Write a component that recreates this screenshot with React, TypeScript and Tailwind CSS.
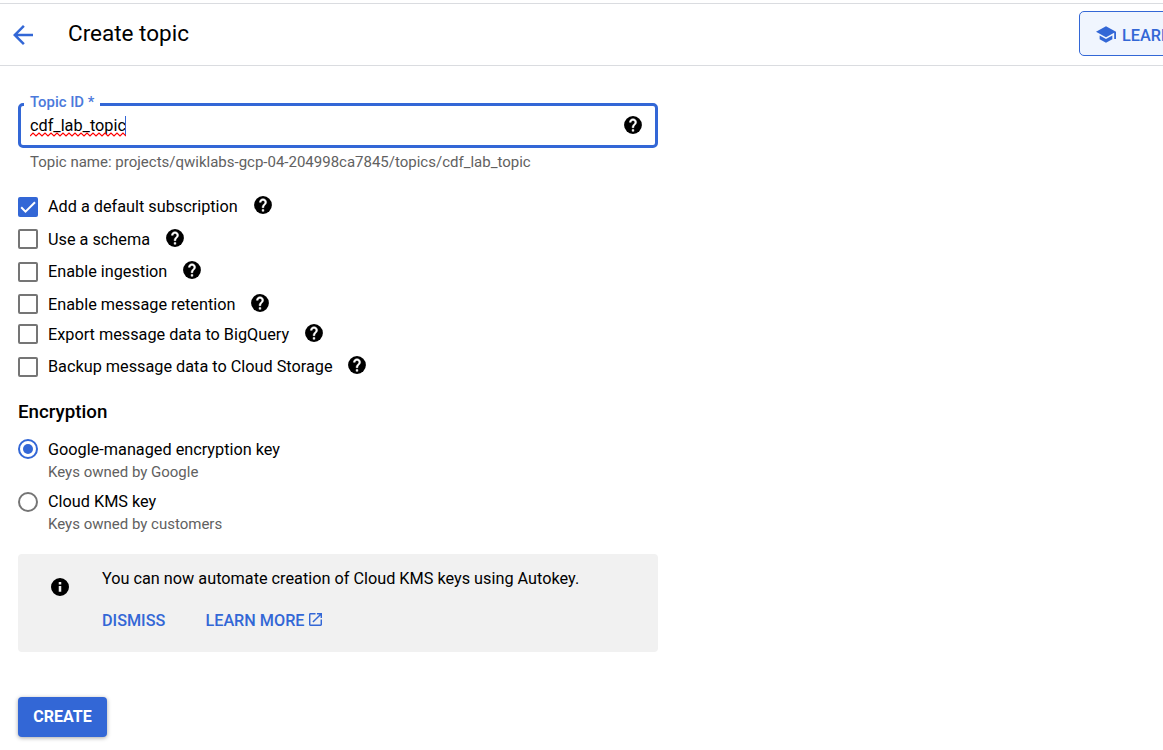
import React from "react";

function HelpIcon({ shift = "" }: { shift?: string }) {
  return (
    <svg viewBox="2 2 20 20" className={`size-[18px] shrink-0 ${shift}`}>
      <circle cx="12" cy="12" r="9.9" className="fill-black" />
      <path
        className="fill-white stroke-white stroke-[0.5]"
        d="M13 19h-2v-2h2v2zm2.070-7.750l-.9.92C13.450 12.900 13 13.500 13 15h-2v-.5c0-1.100.45-2.100 1.170-2.830l1.240-1.260c.37-.36.59-.86.59-1.410 0-1.100-.9-2-2-2s-2 .9-2 2H8c0-2.210 1.790-4 4-4s4 1.790 4 4c0 .88-.36 1.680-.93 2.250z"
      />
    </svg>
  );
}

type Option = { label: string; checked?: boolean; row: string; text: string; icon?: string };

const options: Option[] = [
  { label: "Add a default subscription", checked: true, row: "h-8", text: "w-[206px]", icon: "-mt-px" },
  { label: "Use a schema", row: "h-[33px]", text: "w-[118px] pt-px" },
  { label: "Enable ingestion", row: "h-8", text: "w-[135px]", icon: "-mt-px" },
  { label: "Enable message retention", row: "h-[30px]", text: "w-[203px] pt-px" },
  { label: "Export message data to BigQuery", row: "h-[33px]", text: "w-[257px] pt-px" },
  { label: "Backup message data to Cloud Storage", row: "h-8", text: "w-[300px]", icon: "-mt-px" },
];

function CheckRow({ label, checked, row, text, icon }: Option) {
  return (
    <label className={`flex items-start ${row}`}>
      {checked ? (
        <span className="flex size-5 shrink-0 items-center justify-center rounded-[2px] bg-[#3367d6]">
          <svg viewBox="0 0 20 20" className="size-5 fill-none stroke-white stroke-2">
            <path d="M3.2 10.300l4.300 4.300L17 5.200" />
          </svg>
        </span>
      ) : (
        <span className="size-5 shrink-0 rounded-[2px] border-2 border-[#757575]" />
      )}
      <span className={`ml-2.5 shrink-0 whitespace-nowrap text-[16.25px] leading-5 ${text}`}>{label}</span>
      <HelpIcon shift={icon} />
    </label>
  );
}

type RadioProps = { label: string; hint: string; selected?: boolean; labelPad?: string };

function RadioRow({ label, hint, selected, labelPad = "" }: RadioProps) {
  return (
    <label className="flex h-[53px] items-start">
      <span
        className={`flex size-5 shrink-0 items-center justify-center rounded-full border-2 ${selected ? "border-[#3367d6]" : "border-[#757575]"}`}
      >
        {selected && <span className="size-2.5 rounded-full bg-[#3367d6]" />}
      </span>
      <span className="ml-2.5 flex flex-col">
        <span className={`text-[16.25px] leading-5 ${labelPad}`}>{label}</span>
        <span className="mt-0.5 text-[15px] leading-5 text-[#616161]">{hint}</span>
      </span>
    </label>
  );
}

export default function App() {
  return (
    <div className="h-[750px] w-[1163px] overflow-hidden bg-white font-['Roboto',sans-serif] text-black">
      <header className="mt-[3px] flex h-[63px] items-center border-y border-[#dadce0]">
        <svg viewBox="4 4 16 16" className="ml-[13px] size-5 shrink-0 fill-[#3367d6]">
          <path d="M20 11H7.830l5.590-5.590L12 4l-8 8 8 8 1.410-1.410L7.830 13H20v-2z" />
        </svg>
        <h1 className="ml-[35px] -mt-1 w-[1011px] shrink-0 text-[22.5px] leading-7">Create topic</h1>
        <button className="-mt-0.5 flex h-[45px] w-[150px] shrink-0 items-center rounded-[5px] border border-[#3367d6] bg-[#f0f5fe] pl-4 text-[16.25px] font-medium text-[#3367d6]">
          <svg viewBox="1 3 22 18" className="mr-1.5 mt-px h-[17px] w-5 shrink-0 fill-[#3367d6]">
            <path d="M5 13.180v4L12 21l7-3.820v-4L12 17l-7-3.820zM12 3L1 9l11 6 9-4.910V17h2V9L12 3z" />
          </svg>
          <span className="pt-[5px] leading-5">LEARN</span>
        </button>
      </header>

      <main className="flex w-[658px] flex-col pl-[18px] pt-[37px]">
        <div className="relative flex h-[45px] items-center justify-between rounded-[5px] border-[3px] border-[#3367d6] pl-[9px] pr-[13px]">
          <span className="absolute -top-[14px] left-[3px] bg-white px-1.5 text-[14.9px] font-medium leading-5 text-[#4b79db]">
            Topic ID *
          </span>
          <div className="relative flex text-[16.25px] leading-5">
            <span className="w-[95px]">cdf_lab_topic</span>
            <span className="h-5 w-px bg-[#3367d6]" />
            <svg viewBox="0 0 96 5" className="absolute left-0 top-4 h-[5px] w-24 fill-none stroke-[#f00] stroke-[1.2]">
              <path d="M0 4l3-3 3 3 3-3 3 3 3-3 3 3 3-3 3 3 3-3 3 3 3-3 3 3 3-3 3 3 3-3 3 3 3-3 3 3 3-3 3 3 3-3 3 3 3-3 3 3 3-3 3 3 3-3 3 3 3-3 3 3 3-3 3 3" />
            </svg>
          </div>
          <HelpIcon shift="-mt-px" />
        </div>
        <p className="ml-3 mt-1 text-[15px] leading-5 text-[#616161]">
          Topic name: projects/qwiklabs-gcp-04-204998ca7845/topics/cdf_lab_topic
        </p>

        <div className="mt-[25px] flex flex-col">
          {options.map((o) => (
            <CheckRow key={o.label} {...o} />
          ))}
        </div>

        <h2 className="mt-3 pt-px text-[18.75px] font-medium leading-5">Encryption</h2>
        <div className="mt-[17px] flex flex-col">
          <RadioRow label="Google-managed encryption key" hint="Keys owned by Google" selected labelPad="pt-px" />
          <RadioRow label="Cloud KMS key" hint="Keys owned by customers" />
        </div>

        <section className="mt-[9px] flex h-[98px] rounded-[4px] bg-[#f1f1f1]">
          <svg viewBox="2 2 20 20" className="ml-[33px] mt-6 size-[18px] shrink-0 fill-black">
            <path
              fillRule="evenodd"
              d="M12 2a10 10 0 1 0 0 20a10 10 0 1 0 0-20zM10.600 10.900h2.800V17.300h-2.800zM10.600 6.500h2.800v2.600h-2.800z"
            />
          </svg>
          <div className="ml-[33px] flex flex-col">
            <p className="mt-[15px] text-[16.25px] leading-5">
              You can now automate creation of Cloud KMS keys using Autokey.
            </p>
            <div className="mt-[22px] flex text-[16.2px] font-medium leading-5 text-[#3367d6]">
              <button className="w-[103.5px] text-left">DISMISS</button>
              <button className="flex items-center">
                LEARN MORE
                <svg viewBox="3 3 18 18" className="-mt-1 ml-[5px] size-[13px] fill-[#3367d6]">
                  <path d="M19 19H5V5h7V3H5c-1.110 0-2 .9-2 2v14c0 1.100.89 2 2 2h14c1.100 0 2-.9 2-2v-7h-2v7zM14 3v2h3.590l-9.830 9.830 1.410 1.410L19 6.410V10h2V3h-7z" />
                </svg>
              </button>
            </div>
          </div>
        </section>

        <button className="mt-[45px] h-10 w-[89px] rounded-[4px] bg-[#3367d6] text-base font-bold text-white shadow-[0_1px_4px_rgba(0,0,0,0.35)]">
          CREATE
        </button>
      </main>
    </div>
  );
}
